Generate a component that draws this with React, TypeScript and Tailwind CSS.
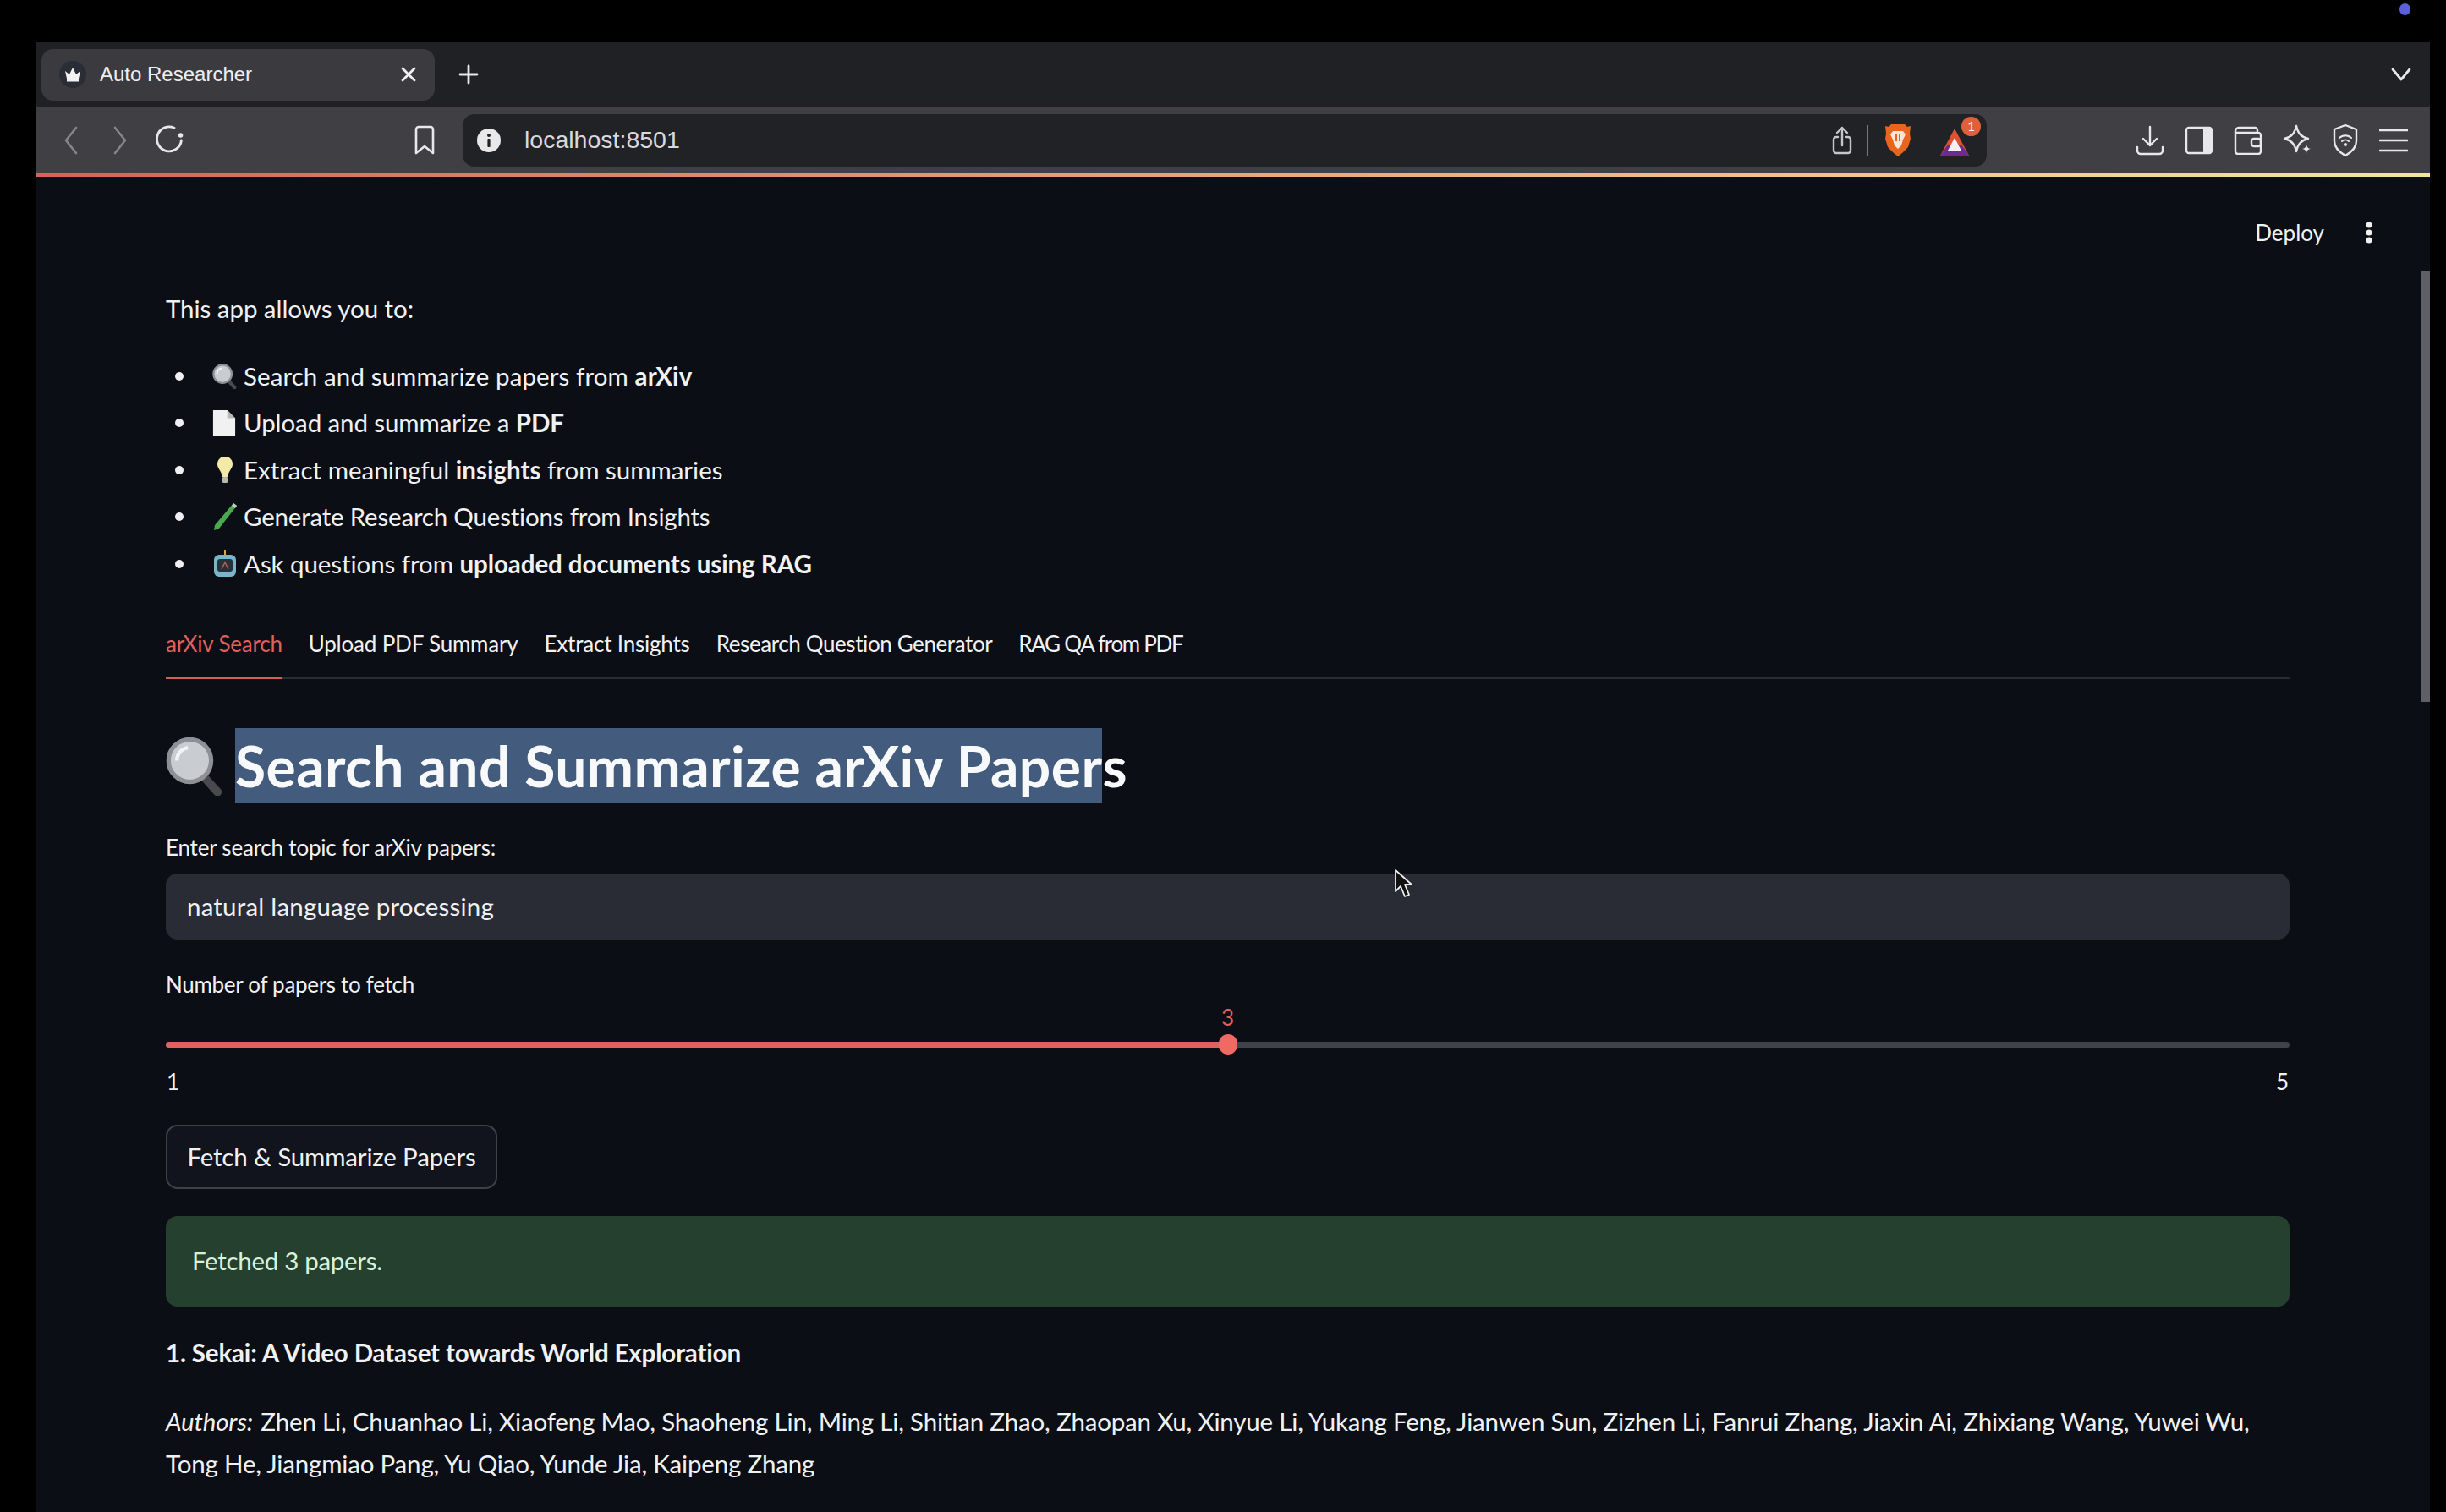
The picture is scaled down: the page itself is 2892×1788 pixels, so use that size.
import React from "react";

const sans = "font-['Lato','Noto_Sans',sans-serif]";

function Crown() {
  return (
    <span className="flex h-[32px] w-[32px] items-center justify-center rounded-full bg-[#2a2c36]">
      <svg width="24" height="20" viewBox="0 0 24 20"><path d="M3 6l5 4 4-8 4 8 5-4-2 9H5z" fill="#f2f2f2" /><rect x="5" y="16" width="14" height="2.5" fill="#f2f2f2" /></svg>
    </span>
  );
}

const stroke = { fill: "none", stroke: "#e8e8ea", strokeWidth: 2.4, strokeLinecap: "round" as const, strokeLinejoin: "round" as const };

function Back({ flip }: { flip?: boolean }) {
  return (
    <svg width="20" height="36" viewBox="0 0 20 36" className={flip ? "-scale-x-100" : ""}>
      <path d="M16 3L4 18l12 15" fill="none" stroke="#85868a" strokeWidth="2.6" strokeLinecap="round" strokeLinejoin="round" />
    </svg>
  );
}
function Reload() {
  return (
    <svg width="34" height="34" viewBox="0 0 34 34">
      <path d="M23 4.200A14.500 14.500 0 1 0 31.400 19" {...stroke} strokeWidth={2.8} />
      <circle cx="30.500" cy="13" r="2.800" fill="#e8e8ea" />
    </svg>
  );
}
function BookmarkIcon() {
  return (
    <svg width="26" height="36" viewBox="0 0 26 36"><path d="M3 5a3 3 0 0 1 3-3h14a3 3 0 0 1 3 3v28l-10-8-10 8z" {...stroke} strokeWidth={2.6} /></svg>
  );
}
function InfoIcon() {
  return (
    <svg width="28" height="28" viewBox="0 0 28 28"><circle cx="14" cy="14" r="14" fill="#e8e8ea" /><circle cx="14" cy="8" r="2" fill="#212226" /><rect x="12.4" y="12" width="3.2" height="10" rx="1" fill="#212226" /></svg>
  );
}
function ShareIcon() {
  return (
    <svg width="24" height="36" viewBox="0 0 24 36"><path d="M7 14H5a3 3 0 0 0-3 3v13a3 3 0 0 0 3 3h14a3 3 0 0 0 3-3V17a3 3 0 0 0-3-3h-2M12 24V3M6 9l6-6 6 6" {...stroke} stroke="#c6c6c9" /></svg>
  );
}
function BraveIcon() {
  return (
    <svg width="32" height="40" viewBox="0 0 32 40">
      <path d="M8 1h16l3 3 4-1-1 9 1 6-3 10-7 7-5 4-5-4-7-7-3-10 1-6-1-9 4 1z" fill="#e8651f" />
      <path d="M10 9h12l3 4-3 6-2 7-4 4-4-4-2-7-3-6z" fill="#f9e6d8" />
      <path d="M14 12v9M18 12v9" stroke="#e8651f" strokeWidth="2" />
    </svg>
  );
}
function BatIcon() {
  return (
    <span className="relative flex h-[40px] w-[36px]">
      <svg width="36" height="36" viewBox="0 0 36 36" className="mt-[4px]">
        <path d="M18 2L35 34H1z" fill="#e0512f" />
        <path d="M1 34l9-13 16 0 9 13z" fill="#6a2c91" />
        <path d="M18 13l8 15H10z" fill="#f4f0f5" />
      </svg>
      <span className={`absolute right-[-13px] top-[-8px] flex h-[23px] w-[23px] items-center justify-center rounded-full bg-[#e0603a] text-[15px] text-white ${sans}`}>1</span>
    </span>
  );
}
function DownloadIcon() {
  return (
    <svg width="34" height="36" viewBox="0 0 34 36"><path d="M17 2v22M9 16l8 8 8-8M2 26v4a4 4 0 0 0 4 4h22a4 4 0 0 0 4-4v-4" {...stroke} /></svg>
  );
}
function SidebarIcon() {
  return (
    <svg width="34" height="34" viewBox="0 0 34 34"><rect x="2" y="2" width="30" height="30" rx="3" {...stroke} /><rect x="22" y="2" width="10" height="30" rx="2" fill="#e8e8ea" /></svg>
  );
}
function WalletIcon() {
  return (
    <svg width="34" height="34" viewBox="0 0 34 34"><path d="M28 8V5a3 3 0 0 0-3-3H6a4 4 0 0 0-4 4v24a3 3 0 0 0 3 3h24a3 3 0 0 0 3-3V11a3 3 0 0 0-3-3H2" {...stroke} /><rect x="21" y="15" width="11" height="9" rx="3" {...stroke} /></svg>
  );
}
function StarIcon() {
  return (
    <svg width="34" height="38" viewBox="0 0 34 38"><path d="M16 2c2 9 6 13 14 15-8 2-12 6-14 15C14 23 10 19 2 17c8-2 12-6 14-15z" {...stroke} /><path d="M28 24c.6 3 1.800 4.400 5 5-3.200.6-4.400 2-5 5-.6-3-1.800-4.400-5-5 3.200-.6 4.400-2 5-5z" fill="#e8e8ea" /></svg>
  );
}
function VpnIcon() {
  return (
    <svg width="32" height="40" viewBox="0 0 32 40"><path d="M16 2l13 5v14c0 8-6 13-13 17C9 34 3 29 3 21V7z" {...stroke} /><path d="M9 17a10 10 0 0 1 14 0M12 21a6 6 0 0 1 8 0" {...stroke} strokeWidth={2} /><circle cx="16" cy="25" r="2" fill="#e8e8ea" /></svg>
  );
}
function HamburgerIcon() {
  return (
    <svg width="34" height="28" viewBox="0 0 34 28"><path d="M1 2h32M1 14h32M1 26h32" {...stroke} strokeWidth={2.6} /></svg>
  );
}

function Magnifier({ s }: { s: number }) {
  return (
    <svg width={s} height={s} viewBox="0 0 32 32">
      <path d="M19 20l9 10" stroke="#4a4a4d" strokeWidth="4.5" strokeLinecap="round" />
      <circle cx="13" cy="13" r="11.500" fill="#c9ccd0" stroke="#8d9094" strokeWidth="2.400" />
      <path d="M6 13a7 7 0 0 1 6-7" fill="none" stroke="#f3f4f6" strokeWidth="2" />
    </svg>
  );
}
function PageEmoji() {
  return (
    <svg width="28" height="34" viewBox="0 0 30 34"><path d="M1 1h18l10 10v22H1z" fill="#f1f1f1" /><path d="M19 1l10 10H19z" fill="#b9b9b9" /></svg>
  );
}
function BulbEmoji() {
  return (
    <svg width="30" height="34" viewBox="0 0 30 34"><path d="M15 1c6 0 9 4 9 9 0 5-5 8-6 15h-6C11 18 6 15 6 10c0-5 3-9 9-9z" fill="#f4eaa8" /><rect x="11.500" y="25" width="7" height="7" rx="2" fill="#b9b9ae" /></svg>
  );
}
function PencilEmoji() {
  return (
    <svg width="30" height="34" viewBox="0 0 30 34"><path d="M25 1l4 3L8 31l-6 2 1-6z" fill="#4aa84f" /><path d="M25 1l4 3-2 3-4-3z" fill="#c8c8c8" /></svg>
  );
}
function RobotEmoji() {
  return (
    <svg width="30" height="34" viewBox="0 0 30 34"><rect x="14" y="0" width="2" height="6" fill="#d9a441" /><rect x="2" y="6" width="26" height="26" rx="6" fill="#7ab5c9" /><rect x="6" y="11" width="18" height="15" rx="3" fill="#26323a" /><path d="M11 23l4-8 4 8" stroke="#c2584c" strokeWidth="1.500" fill="none" /></svg>
  );
}

function Cursor() {
  return (
    <svg width="22" height="36" viewBox="0 0 22 36" className="absolute left-[1606px] top-[818px]">
      <path d="M2 2v25l6-6 5 12 5-2-5-12h8z" fill="#111" stroke="#eee" strokeWidth="1.800" strokeLinejoin="round" />
    </svg>
  );
}

function ListRow({ icon, track, children }: { icon: React.ReactNode; track: string; children: React.ReactNode }) {
  return (
    <li className="flex h-[55.5px] items-center">
      <span className="ml-[11px] h-[10px] w-[10px] rounded-full bg-[#f0f0f2]" />
      <span className="ml-[34px] flex w-[33px] items-center justify-start">{icon}</span>
      <span className={`ml-[4px] ${track}`}>{children}</span>
    </li>
  );
}

export default function App() {
  return (
    <div className={`relative h-[1788px] w-[2892px] overflow-hidden bg-black pl-[42px] pr-[19px] pt-[50px] ${sans}`}>
      <span className="absolute left-[2837px] top-[4px] h-[14px] w-[13px] rounded-full bg-[#5a60dc]" />
      <div className="relative flex h-[1738px] flex-col overflow-hidden bg-[#0c0e15] text-[#f0f1f3]">
        {/* tab strip */}
        <div className="flex h-[76px] items-center bg-[#202125] pl-[7px] pr-[22px]">
          <div className="flex h-[61px] w-[465px] items-center rounded-[14px] bg-[#3b3b3f] pl-[21px] pr-[22px]">
            <Crown />
            <span className="ml-[16px] flex-1 font-['Liberation_Sans',sans-serif] text-[24px] text-[#eeeeef]">Auto Researcher</span>
            <svg width="18" height="18" viewBox="0 0 18 18"><path d="M2 2l14 14M16 2L2 16" stroke="#f0f0f0" strokeWidth="2.800" strokeLinecap="round" /></svg>
          </div>
          <svg width="24" height="24" viewBox="0 0 24 24" className="ml-[28px]"><path d="M12 2v20M2 12h20" stroke="#e8e8ea" strokeWidth="2.800" strokeLinecap="round" /></svg>
          <svg width="24" height="16" viewBox="0 0 24 16" className="ml-auto"><path d="M2 2l10 12L22 2" fill="none" stroke="#e8e8ea" strokeWidth="2.800" strokeLinecap="round" strokeLinejoin="round" /></svg>
        </div>
        {/* toolbar */}
        <div className="flex h-[79px] items-center bg-[#404044] pl-[32px] pr-[26px]">
          <Back />
          <span className="ml-[38px]"><Back flip /></span>
          <span className="-mt-[3px] ml-[31px]"><Reload /></span>
          <span className="ml-[272px]"><BookmarkIcon /></span>
          <div className="ml-[32px] flex h-[62px] w-[1802px] items-center rounded-[14px] bg-[#212226] pl-[17px] pr-[18px]">
            <InfoIcon />
            <span className="ml-[28px] -mt-[1px] flex-1 font-['Liberation_Sans',sans-serif] text-[28.5px] text-[#d9d9dc]">localhost:8501</span>
            <ShareIcon />
            <span className="ml-[17px] h-[36px] w-[2px] bg-[#77787c]" />
            <span className="ml-[19px]"><BraveIcon /></span>
            <span className="ml-[33px] mr-[2px]"><BatIcon /></span>
          </div>
          <div className="ml-auto flex items-center gap-[24px]">
            <DownloadIcon />
            <SidebarIcon />
            <WalletIcon />
            <StarIcon />
            <VpnIcon />
            <HamburgerIcon />
          </div>
        </div>
        <div className="h-[4px] bg-gradient-to-r from-[#d9605e] to-[#f2e796]" />

        {/* page */}
        <div className="relative flex-1 pl-[154px] pr-[166px]">
          <div className="-mr-[128px] mt-[46px] flex h-[40px] items-center justify-end text-[26px] text-[#f0f1f3]">
            <span>Deploy</span>
            <svg width="8" height="26" viewBox="0 0 8 26" className="ml-[49px] mr-[30px]"><circle cx="4" cy="4" r="3.500" fill="#f0f0f2" /><circle cx="4" cy="13" r="3.500" fill="#f0f0f2" /><circle cx="4" cy="22" r="3.500" fill="#f0f0f2" /></svg>
          </div>

          <p className="mt-[50px] flex h-[40px] items-center text-[29.5px] tracking-[-0.05px]">This app allows you to:</p>

          <ul className="mt-[32px] text-[29.5px] text-[#f0f1f3]">
            <ListRow track="tracking-[0.1px]" icon={<Magnifier s={30} />}>Search and summarize papers from <b>arXiv</b></ListRow>
            <ListRow track="tracking-[-0.1px]" icon={<PageEmoji />}>Upload and summarize a <b>PDF</b></ListRow>
            <ListRow track="tracking-[0px]" icon={<BulbEmoji />}>Extract meaningful <b>insights</b> from summaries</ListRow>
            <ListRow track="tracking-[-0.2px]" icon={<PencilEmoji />}>Generate Research Questions from Insights</ListRow>
            <ListRow track="tracking-[-0.07px]" icon={<RobotEmoji />}>Ask questions from <b>uploaded documents using RAG</b></ListRow>
          </ul>

          <div className="mt-[25.500px] flex h-[83px] gap-[31px] border-b-[3px] border-[#2a2c33] text-[26px] tracking-[-0.2px]">
            <span className="h-[83px] border-b-[3px] border-[#d95a57] pt-[21px] leading-[40px] text-[#e2605c]">arXiv Search</span>
            <span className="h-[83px] pt-[21px] leading-[40px]">Upload PDF Summary</span>
            <span className="h-[83px] pt-[21px] leading-[40px]">Extract Insights</span>
            <span className="h-[83px] pt-[21px] leading-[40px] tracking-[-0.4px]">Research Question Generator</span>
            <span className="h-[83px] pt-[21px] leading-[40px] tracking-[-1.3px]">RAG QA from PDF</span>
          </div>

          <h2 className="mt-[58px] flex h-[89px] items-center text-[66px] font-bold tracking-[0.4px] text-[#f8f9fb]">
            <span className="w-[82px]"><Magnifier s={70} /></span>
            <span className="inline-block h-[89px] whitespace-pre bg-[#435b7c] leading-[89px]">Search and Summarize arXiv Paper</span>
            <span className="leading-[89px]">s</span>
          </h2>

          <label className="mt-[32px] block h-[40px] text-[26px] leading-[40px] tracking-[-0.2px]">Enter search topic for arXiv papers:</label>
          <div className="mt-[11px] flex h-[78px] items-center rounded-[14px] bg-[#2a2c35] pl-[25px] text-[29.5px] tracking-[0.2px]">natural language processing</div>

          <label className="mt-[33px] block h-[40px] text-[26px] leading-[40px] tracking-[-0.3px]">Number of papers to fetch</label>
          <div className="relative mt-[48px] h-[7px] rounded-full bg-[#3f4249]">
            <div className="h-[7px] w-1/2 rounded-l-full bg-[#e0615f]" />
            <span className="absolute left-1/2 top-[-9px] h-[24px] w-[22px] -translate-x-[11px] rounded-full bg-[#ef6a64]" />
            <span className="absolute left-1/2 top-[-49px] -translate-x-1/2 text-[26px] leading-[40px] text-[#e2605c]">3</span>
          </div>
          <div className="mt-[20px] flex h-[40px] items-center justify-between px-[1px] text-[26px]">
            <span>1</span>
            <span>5</span>
          </div>

          <button className="mt-[31px] flex h-[76px] w-[392px] items-center justify-center rounded-[14px] border-[2px] border-[#3e414a] bg-[#12141d] text-[29.5px] tracking-[-0.15px]">Fetch &amp; Summarize Papers</button>

          <div className="mt-[32px] flex h-[107px] items-center rounded-[14px] bg-[#25402e] pl-[31px] text-[29.5px] tracking-[-0.3px] text-[#d6f2dc]">Fetched 3 papers.</div>

          <p className="mt-[35px] h-[40px] text-[29.5px] font-bold leading-[40px] tracking-[-0.15px]">1. Sekai: A Video Dataset towards World Exploration</p>

          <p className="mt-[36px] text-[29.5px] leading-[50px] tracking-[-0.18px]"><i className="pr-[2px]">Authors:</i> Zhen Li, Chuanhao Li, Xiaofeng Mao, Shaoheng Lin, Ming Li, Shitian Zhao, Zhaopan Xu, Xinyue Li, Yukang Feng, Jianwen Sun, Zizhen Li, Fanrui Zhang, Jiaxin Ai, Zhixiang Wang, Yuwei Wu, Tong He, Jiangmiao Pang, Yu Qiao, Yunde Jia, Kaipeng Zhang</p>

          <Cursor />
          <span className="absolute right-0 top-[112px] h-[509px] w-[11px] bg-[#5f6066]" />
        </div>
      </div>
    </div>
  );
}
